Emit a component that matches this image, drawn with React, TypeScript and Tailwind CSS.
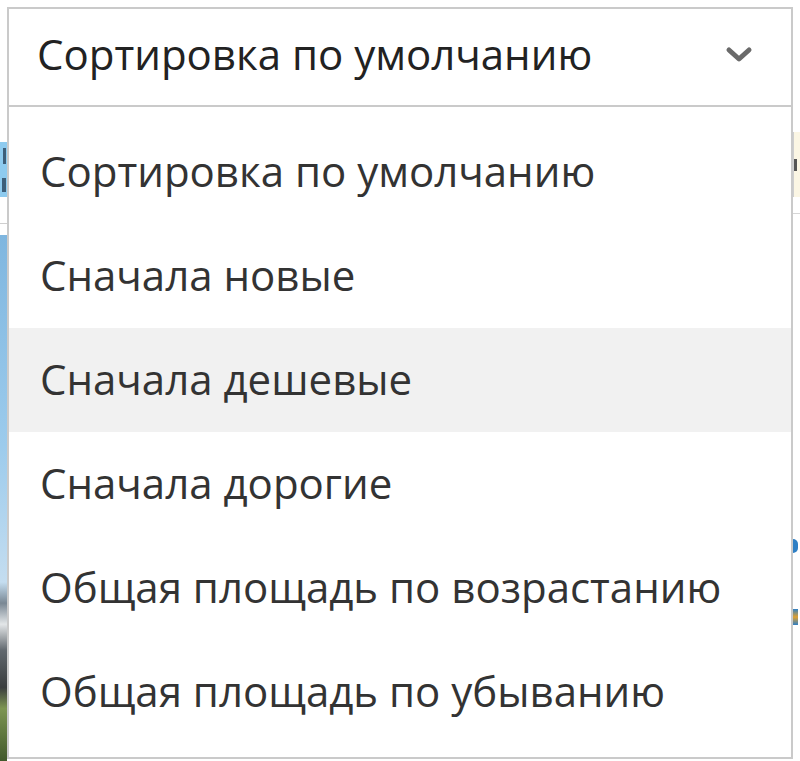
import React from "react";

const items = [
  "Сортировка по умолчанию",
  "Сначала новые",
  "Сначала дешевые",
  "Сначала дорогие",
  "Общая площадь по возрастанию",
  "Общая площадь по убыванию",
];

export default function App() {
  return (
    <div
      className="flex h-[761px] w-[800px] overflow-hidden bg-white"
      style={{ fontFamily: '"Open Sans", "Noto Sans", sans-serif' }}
    >
      {/* left sliver of page behind */}
      <div className="flex w-[7px] shrink-0 flex-col">
        <div className="h-[142px]" />
        <div className="flex h-[55px] flex-col justify-center gap-[14px] bg-[#8ecbef]">
          <div className="ml-[3px] h-[16px] w-[3px] bg-[#3d5f7a]" />
          <div className="ml-[2px] h-[14px] w-[4px] bg-[#3d5f7a]" />
        </div>
        <div className="h-[26px]" />
        <div className="h-px bg-[#cfcfcf]" />
        <div className="h-[11px]" />
        <div className="flex-1 bg-[linear-gradient(to_bottom,#7fb6df_0%,#9ccbec_40%,#c4ddf0_66%,#7a8894_70%,#e3e6e8_74%,#60676d_79%,#3a3d3e_86%,#7d9552_90%,#41592b_100%)]" />
      </div>

      {/* dropdown */}
      <div className="flex w-[786px] shrink-0 flex-col pt-[7px]">
        <div className="flex h-[100px] items-center justify-between border-2 border-[#cacaca] bg-white pb-[6px] pl-[28px] pr-[38px]">
          <span className="text-[42px] leading-none text-[#222]">
            Сортировка по умолчанию
          </span>
          <svg width="28" height="18" viewBox="0 0 28 18" fill="none" className="mt-[2px]">
            <path
              d="M4 4 L14 13 L24 4"
              stroke="#6a6a6a"
              strokeWidth="5"
              strokeLinecap="round"
              strokeLinejoin="round"
            />
          </svg>
        </div>
        <div className="flex flex-col border-x-2 border-b-2 border-[#cacaca] bg-white py-[13px]">
          {items.map((t, i) => (
            <div
              key={t}
              className={
                "flex h-[104px] items-center pb-[2px] pl-[31px] text-[42px] leading-none text-[#333] " +
                (i === 2 ? "bg-[#f1f1f1]" : "")
              }
            >
              {t}
            </div>
          ))}
        </div>
      </div>

      {/* right sliver of page behind */}
      <div className="flex w-[7px] shrink-0 flex-col">
        <div className="h-[132px]" />
        <div className="flex h-[65px] flex-col justify-center border-l border-[#cfcfcf] bg-[#fbf6e4]">
          <div className="h-[12px] w-[3px] bg-[#555]" />
        </div>
        <div className="h-[16px]" />
        <div className="h-px bg-[#d6d6d6]" />
        <div className="h-[325px]" />
        <div className="h-[14px] w-[5px] rounded-r-full bg-[#2f7fc4]" />
        <div className="h-[56px]" />
        <div className="h-[16px] w-[5px] bg-[linear-gradient(to_bottom,#2f7fc4,#e0a030,#2f7fc4)]" />
        <div className="flex-1" />
      </div>
    </div>
  );
}
